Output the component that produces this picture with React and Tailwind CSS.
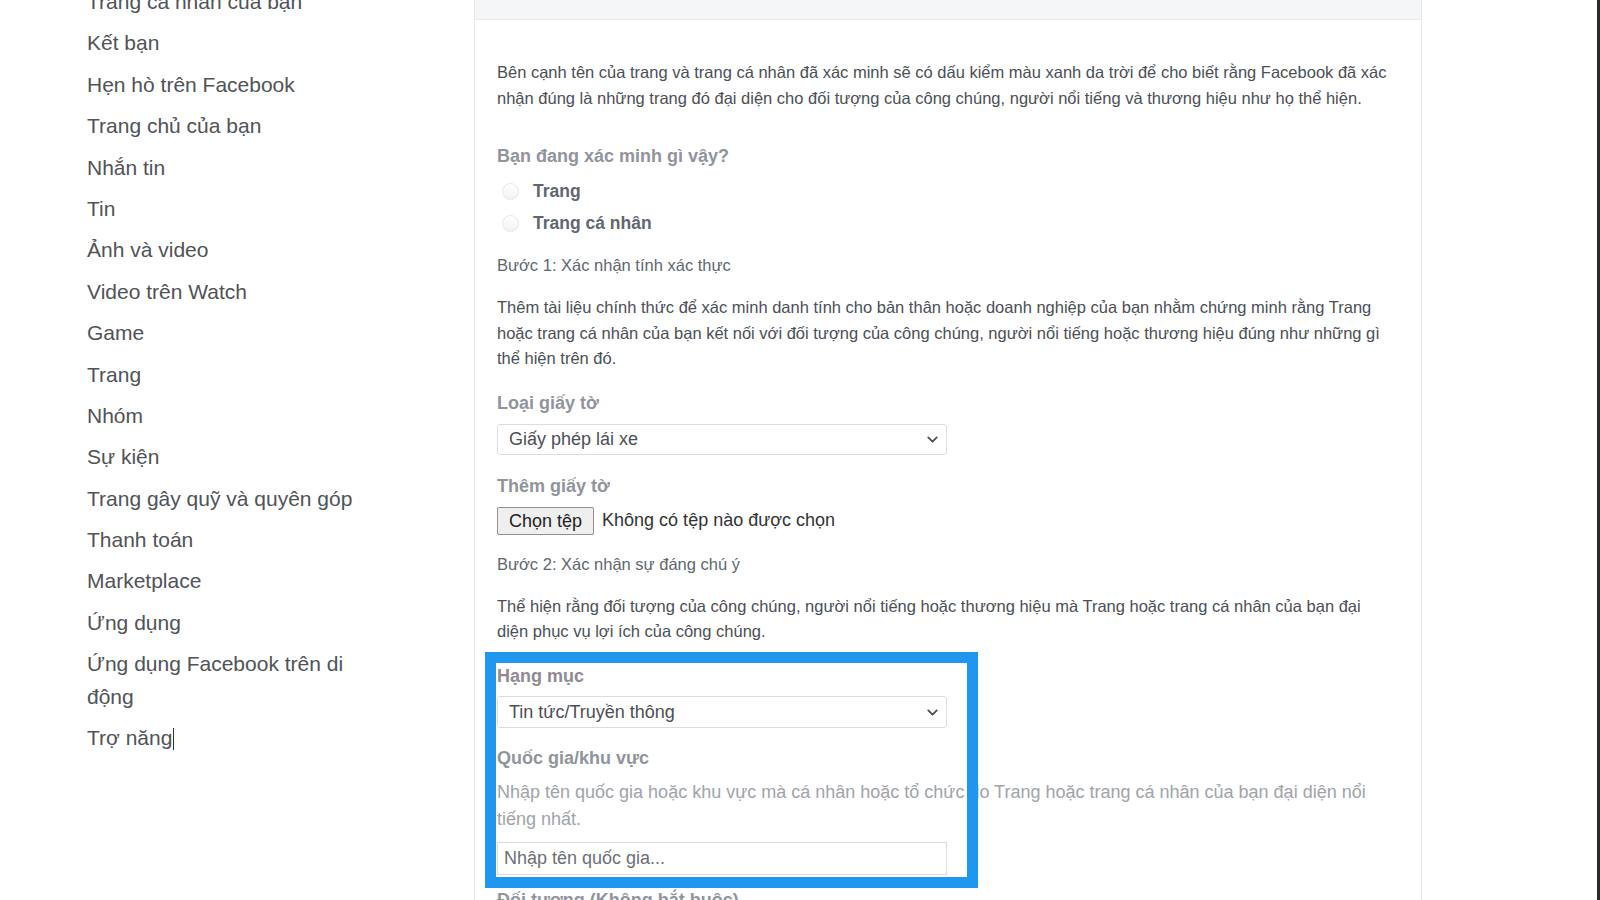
import { ChevronDown } from 'lucide-react';

const menu = [
  'Trang cá nhân của bạn',
  'Kết bạn',
  'Hẹn hò trên Facebook',
  'Trang chủ của bạn',
  'Nhắn tin',
  'Tin',
  'Ảnh và video',
  'Video trên Watch',
  'Game',
  'Trang',
  'Nhóm',
  'Sự kiện',
  'Trang gây quỹ và quyên góp',
  'Thanh toán',
  'Marketplace',
  'Ứng dụng',
  'Ứng dụng Facebook trên di động',
];

function Select({ value, className = '' }) {
  return (
    <div className={`flex w-[450px] items-center justify-between rounded-[3px] border border-[#dcdde0] bg-white pl-[11px] pr-[5px] text-[18px] text-[#4b4f56] ${className}`}>
      <span>{value}</span>
      <ChevronDown size={17} strokeWidth={2.6} className="text-[#4b4f56]" />
    </div>
  );
}

function Radio({ label }) {
  return (
    <label className="flex h-[32px] items-center gap-[14px] pl-[5px]">
      <span className="h-[17px] w-[17px] rounded-full border border-[#e6e7e9] bg-gradient-to-b from-white to-[#f1f2f4]" />
      <span className="text-[17.5px] font-bold text-[#606770]">{label}</span>
    </label>
  );
}

export default function App() {
  return (
    <div className="flex h-[900px] w-[1600px] overflow-hidden bg-white font-['Liberation_Sans',Arial,sans-serif]">
      {/* left menu, page is scrolled a little */}
      <aside className="w-[474px] shrink-0 pl-[87px]">
        <ul className="-mt-[14px] flex w-[290px] flex-col gap-[8.8px] text-[21px] leading-[32.6px] text-[#505357]">
          {menu.map((item) => (
            <li key={item}>{item}</li>
          ))}
          <li className="flex items-center">
            Trợ năng
            <span className="ml-px h-[22px] w-px bg-[#333]" />
          </li>
        </ul>
      </aside>

      <main className="relative w-[948px] shrink-0 border-x border-[#e6e7e9]">
        <div className="h-[20px] border-b border-[#e9eaed] bg-[#f5f6f7]" />
        <div className="pl-[22px] pr-[29px] text-[16.5px] text-[#4b4f56]">
          <p className="mt-[40px] leading-[25.5px]">
            Bên cạnh tên của trang và trang cá nhân đã xác minh sẽ có dấu kiểm màu xanh da trời để cho biết rằng Facebook đã xác nhận đúng là những trang đó đại diện cho đối tượng của công chúng, người nổi tiếng và thương hiệu như họ thể hiện.
          </p>

          <p className="mt-[33px] text-[18px] font-bold leading-[24px] text-[#90949c]">Bạn đang xác minh gì vậy?</p>
          <div className="mt-[7px]">
            <Radio label="Trang" />
            <Radio label="Trang cá nhân" />
          </div>

          <p className="mt-[14px] leading-[24px] text-[#606770]">Bước 1: Xác nhận tính xác thực</p>
          <p className="mt-[18px] leading-[25.5px]">
            Thêm tài liệu chính thức để xác minh danh tính cho bản thân hoặc doanh nghiệp của bạn nhằm chứng minh rằng Trang hoặc trang cá nhân của bạn kết nối với đối tượng của công chúng, người nổi tiếng hoặc thương hiệu đúng như những gì thể hiện trên đó.
          </p>

          <p className="mt-[19px] text-[18px] font-bold leading-[24px] text-[#90949c]">Loại giấy tờ</p>
          <Select value="Giấy phép lái xe" className="mt-[9px] h-[31px]" />

          <p className="mt-[19px] text-[18px] font-bold leading-[24px] text-[#90949c]">Thêm giấy tờ</p>
          <div className="mt-[9px] flex h-[28px] items-center gap-[8px] text-[18px] text-[#333]">
            <button className="h-[28px] rounded-[2px] border border-[#8f8f8f] bg-[#efefef] px-[11px] leading-none text-[#222]">Chọn tệp</button>
            <span>Không có tệp nào được chọn</span>
          </div>

          <p className="mt-[17px] leading-[24px] text-[#606770]">Bước 2: Xác nhận sự đáng chú ý</p>
          <p className="mt-[18px] leading-[25.5px]">
            Thể hiện rằng đối tượng của công chúng, người nổi tiếng hoặc thương hiệu mà Trang hoặc trang cá nhân của bạn đại diện phục vụ lợi ích của công chúng.
          </p>

          <p className="mt-[19px] text-[18px] font-bold leading-[24px] text-[#8f8a93]">Hạng mục</p>
          <Select value="Tin tức/Truyền thông" className="mt-[8.5px] h-[32px]" />

          <p className="mt-[18px] text-[18px] font-bold leading-[24px] text-[#90949c]">Quốc gia/khu vực</p>
          <p className="mt-[8.5px] text-[18px] leading-[27px] text-[#a0a4aa]">
            Nhập tên quốc gia hoặc khu vực mà cá nhân hoặc tổ chức do Trang hoặc trang cá nhân của bạn đại diện nổi tiếng nhất.
          </p>
          <div className="mt-[9.5px] flex h-[33px] w-[450px] items-center border border-[#dcdde0] px-[6px] text-[18px] text-[#6b6f75]">
            Nhập tên quốc gia...
          </div>

          <p className="mt-[13px] text-[18px] font-bold leading-[24px] text-[#90949c]">Đối tượng (Không bắt buộc)</p>
        </div>

        {/* blue highlight drawn over the form */}
        <div className="absolute left-[10px] top-[652px] h-[236px] w-[493px] border-[11px] border-[#1f97ef]" />
      </main>

      <div className="flex-1" />
      <div className="w-[3px] bg-[#2a2a2a]" />
    </div>
  );
}
